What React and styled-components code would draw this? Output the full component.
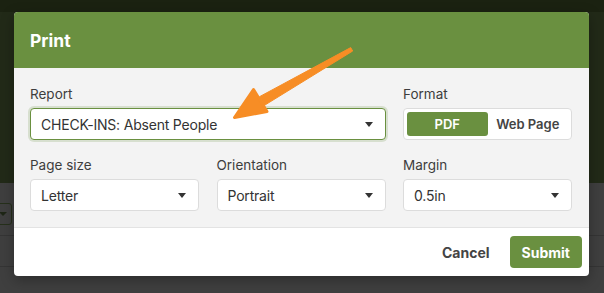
import React from 'react';
import styled, { createGlobalStyle } from 'styled-components';

const GlobalStyle = createGlobalStyle`
  html, body {
    margin: 0;
    padding: 0;
    width: 604px;
    height: 293px;
    overflow: hidden;
    font-family: Inter, "Liberation Sans", sans-serif;
  }
`;

const Page = styled.div`
  position: relative;
  width: 604px;
  height: 293px;
  display: flex;
  flex-direction: column;
  background: #3f3f3f;
  overflow: hidden;
`;

const TopStrip = styled.div`
  height: 12px;
  background: #1b2211;
`;

const HeaderBand = styled.div`
  height: 171px;
  background: #222a18;
`;

const BackdropRow = styled.div`
  height: ${(p) => p.h}px;
  border-bottom: 1px solid #353535;
  display: flex;
  align-items: center;
`;

const BgSelect = styled.div`
  margin-left: -12px;
  margin-top: 10px;
  width: 24px;
  height: 22px;
  border: 1px solid #26301b;
  border-radius: 3px;
  display: flex;
  align-items: center;
  justify-content: flex-end;
  padding-right: 4px;
  box-sizing: border-box;
  &::after {
    content: '';
    border-left: 4px solid transparent;
    border-right: 4px solid transparent;
    border-top: 4px solid #1e2616;
  }
`;

const Modal = styled.div`
  position: absolute;
  left: 14px;
  top: 12px;
  width: 575px;
  border-radius: 4px;
  overflow: hidden;
  background: #fff;
  box-shadow: 0 4px 14px rgba(0, 0, 0, 0.3);
`;

const Header = styled.div`
  height: 56px;
  background: #6a9040;
  display: flex;
  align-items: center;
  padding-left: 16px;
  color: #fff;
  font-size: 17.5px;
  font-weight: 700;
`;

const Body = styled.div`
  background: #f3f3f3;
  padding: 18px 17px 16px 16px;
  display: grid;
  grid-template-columns: repeat(3, 169px);
  column-gap: 17.5px;
  row-gap: 17px;
  border-bottom: 1px solid #e3e3e3;
`;

const Field = styled.div`
  grid-column: span ${(p) => p.span || 1};
  display: flex;
  flex-direction: column;
  gap: 5px;
`;

const Label = styled.div`
  font-size: 13.5px;
  line-height: 17px;
  color: #3d3d3d;
`;

const Select = styled.div`
  height: 32px;
  box-sizing: border-box;
  background: #fff;
  border: 1px solid ${(p) => (p.focused ? '#6a9040' : '#dcdcdc')};
  box-shadow: ${(p) => (p.focused ? '0 0 0 2px rgba(106, 144, 64, 0.2)' : 'none')};
  border-radius: 4px;
  display: flex;
  align-items: center;
  justify-content: space-between;
  padding: 0 12px 0 10px;
  font-size: 14px;
  letter-spacing: -0.2px;
  color: #333;
`;

const Caret = styled.span`
  width: 0;
  height: 0;
  border-left: 4px solid transparent;
  border-right: 4px solid transparent;
  border-top: 5px solid #333;
`;

const Segmented = styled.div`
  height: 32px;
  box-sizing: border-box;
  background: #fff;
  border: 1px solid #dcdcdc;
  border-radius: 4px;
  padding: 3px;
  display: flex;
`;

const Segment = styled.div`
  flex: 1;
  border-radius: 3px;
  display: flex;
  align-items: center;
  justify-content: center;
  font-size: 13px;
  font-weight: 600;
  background: ${(p) => (p.active ? '#6a9040' : 'transparent')};
  color: ${(p) => (p.active ? '#fff' : '#444')};
`;

const Footer = styled.div`
  height: 48px;
  display: flex;
  align-items: center;
  justify-content: flex-end;
  gap: 20px;
  padding-right: 7px;
`;

const TextButton = styled.div`
  font-size: 14px;
  font-weight: 700;
  color: #444;
`;

const PrimaryButton = styled.div`
  height: 32px;
  padding: 0 12px;
  border-radius: 4px;
  background: #6a9040;
  color: #fff;
  font-size: 14px;
  font-weight: 700;
  display: flex;
  align-items: center;
`;

const ArrowLayer = styled.svg`
  position: absolute;
  left: 0;
  top: 0;
  pointer-events: none;
`;

const SelectBox = ({ value, focused }) => (
  <Select focused={focused}>
    <span>{value}</span>
    <Caret />
  </Select>
);

export default function App() {
  return (
    <Page>
      <GlobalStyle />
      <TopStrip />
      <HeaderBand />
      <BackdropRow h={52}>
        <BgSelect />
      </BackdropRow>
      <BackdropRow h={30} />

      <Modal>
        <Header>Print</Header>
        <Body>
          <Field span={2}>
            <Label>Report</Label>
            <SelectBox value="CHECK-INS: Absent People" focused />
          </Field>
          <Field>
            <Label>Format</Label>
            <Segmented>
              <Segment active>PDF</Segment>
              <Segment>Web Page</Segment>
            </Segmented>
          </Field>
          <Field>
            <Label>Page size</Label>
            <SelectBox value="Letter" />
          </Field>
          <Field>
            <Label>Orientation</Label>
            <SelectBox value="Portrait" />
          </Field>
          <Field>
            <Label>Margin</Label>
            <SelectBox value="0.5in" />
          </Field>
        </Body>
        <Footer>
          <TextButton>Cancel</TextButton>
          <PrimaryButton>Submit</PrimaryButton>
        </Footer>
      </Modal>

      <ArrowLayer width="604" height="293" viewBox="0 0 604 293">
        <g fill="#f78d25" stroke="#f78d25" strokeLinejoin="round">
          <polygon points="352.7,51 350.7,47.6 259.5,96.7 264.5,105.3" strokeWidth="1" />
          <polygon points="253.5,89.5 234.5,117.5 267,111.5" strokeWidth="3" />
        </g>
      </ArrowLayer>
    </Page>
  );
}
